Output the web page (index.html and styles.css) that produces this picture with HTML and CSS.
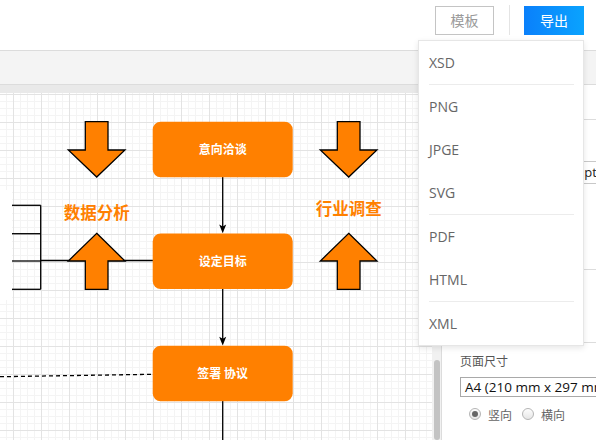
FILE: index.html
```html
<!DOCTYPE html>
<html lang="zh-CN">
<head>
<meta charset="utf-8">
<title>流程图编辑器</title>
<link rel="stylesheet" href="styles.css">
</head>
<body>
<div class="app">
  <header class="header">
    <button class="btn btn-ghost">模板</button>
    <span class="sep"></span>
    <button class="btn btn-primary">导出</button>
  </header>
  <div class="toolbar"></div>
  <div class="main">
    <div class="canvas-col">
      <div class="ruler"></div>
      <div class="canvas-wrap">
        <div class="canvas">
          <svg class="diagram" width="432" height="347" viewBox="0 93 432 347" xmlns="http://www.w3.org/2000/svg">
            <!-- off-screen shape on the left -->
            <rect x="0" y="190" width="12" height="110" fill="#fff"/>
            <g stroke="#000" stroke-width="1.3" fill="none">
              <line x1="12" y1="205.3" x2="40.7" y2="205.3"/>
              <line x1="12" y1="233.7" x2="40.7" y2="233.7"/>
              <line x1="12" y1="261" x2="40.7" y2="261"/>
              <line x1="12" y1="289.3" x2="40.7" y2="289.3"/>
              <line x1="40.7" y1="205.3" x2="40.7" y2="289.3"/>
              <line x1="40.7" y1="260.5" x2="153" y2="260.5"/>
              <line x1="0" y1="376.7" x2="152" y2="374.3" stroke-dasharray="4 3"/>
              <line x1="222.7" y1="177" x2="222.7" y2="227"/>
              <line x1="222.7" y1="289" x2="222.7" y2="339"/>
              <line x1="222.7" y1="401" x2="222.7" y2="440"/>
            </g>
            <polygon points="222.7,233.3 219.2,224.6 222.7,226.6 226.2,224.6" fill="#000"/>
            <polygon points="222.7,345.5 219.2,336.8 222.7,338.8 226.2,336.8" fill="#000"/>

            <!-- big arrows -->
            <g fill="#ff8000" stroke="#000" stroke-width="1.3" stroke-linejoin="miter">
              <polygon points="85.3,121.7 108,121.7 108,150 125,150 96.7,177 68.3,150 85.3,150"/>
              <polygon points="96.7,233.3 125,261 108,261 108,289.3 85.3,289.3 85.3,261 68.3,261"/>
              <polygon points="337.3,121.7 360,121.7 360,150 377,150 348.7,177 320.3,150 337.3,150"/>
              <polygon points="348.7,233.3 377,261 360,261 360,289.3 337.3,289.3 337.3,261 320.3,261"/>
            </g>

            <!-- process boxes -->
            <g fill="#ff8000">
              <rect x="152.7" y="121.7" width="140" height="55.6" rx="8"/>
              <rect x="152.7" y="233.5" width="140" height="55.6" rx="8"/>
              <rect x="152.7" y="345.7" width="140" height="55.6" rx="8"/>
            </g>
            <g class="box-text" fill="#fff" text-anchor="middle">
              <text x="222.7" y="154">意向洽谈</text>
              <text x="222.7" y="265.7">设定目标</text>
              <text x="222.7" y="378">签署 协议</text>
            </g>
            <g class="label-text" fill="#ff8000" text-anchor="middle">
              <text x="96.7" y="218.5">数据分析</text>
              <text x="348.7" y="215">行业调查</text>
            </g>
          </svg>
        </div>
        <div class="vscroll"><div class="thumb"></div></div>
      </div>
    </div>
    <aside class="panel">
      <div class="panel-tabs"></div>
      <div class="panel-sec sec-grid">
        <div class="unit-input">10 pt</div>
      </div>
      <div class="panel-sec sec-mid"></div>
      <div class="sec-page">
        <div class="page-label">页面尺寸</div>
        <div class="page-select">A4 (210 mm x 297 mm)</div>
        <div class="radios">
          <span class="radio checked"></span><span class="radio-text">竖向</span>
          <span class="radio"></span><span class="radio-text">横向</span>
        </div>
      </div>
    </aside>
  </div>

  <div class="menu">
    <div class="menu-item">XSD</div>
    <div class="menu-div"></div>
    <div class="menu-item">PNG</div>
    <div class="menu-item">JPGE</div>
    <div class="menu-item">SVG</div>
    <div class="menu-div"></div>
    <div class="menu-item">PDF</div>
    <div class="menu-item">HTML</div>
    <div class="menu-div"></div>
    <div class="menu-item">XML</div>
  </div>
</div>
</body>
</html>
```

FILE: styles.css
```css
* {
  box-sizing: border-box;
  margin: 0;
  padding: 0;
}

html, body {
  width: 596px;
  height: 440px;
  overflow: hidden;
  background: #fff;
}

body {
  font-family: "Noto Sans CJK SC", "Open Sans", sans-serif;
}

.app {
  position: relative;
  width: 596px;
  height: 440px;
}

/* header */
.header {
  height: 51px;
  border-bottom: 1px solid #dcdcdc;
  display: flex;
  justify-content: flex-end;
  align-items: flex-start;
  padding: 6px 12px 0 0;
}

.btn {
  height: 29px;
  font-family: "Noto Sans CJK SC", sans-serif;
  font-size: 14px;
  line-height: 27px;
  cursor: pointer;
}

.btn-ghost {
  width: 59px;
  border: 1px solid #c4c4c4;
  background: #fff;
  color: #9a9a9a;
}

.sep {
  width: 1px;
  height: 30px;
  margin: -1px 14px 0 15px;
  background: #e4e4e4;
}

.btn-primary {
  width: 60px;
  border: none;
  line-height: 29px;
  background: linear-gradient(90deg, #0a80fb, #0aa3fe);
  color: #fff;
}

/* toolbar */
.toolbar {
  height: 33px;
  background: #f4f4f4;
}

.main {
  display: flex;
  height: 356px;
  overflow: hidden;
}

.canvas-col {
  width: 441px;
  flex-shrink: 0;
  display: flex;
  flex-direction: column;
}

.ruler {
  height: 9px;
  flex-shrink: 0;
  border-top: 1px solid #dcdcdc;
  background: #e9e9e9;
}

.canvas-wrap {
  height: 347px;
  display: flex;
  overflow: hidden;
}

.canvas {
  width: 432px;
  height: 347px;
  background-color: #fff;
  background-image:
    linear-gradient(#e3e3e3 1px, transparent 1px),
    linear-gradient(90deg, #e3e3e3 1px, transparent 1px),
    linear-gradient(#f4f4f4 1px, transparent 1px),
    linear-gradient(90deg, #f4f4f4 1px, transparent 1px);
  background-size: 28px 28px, 28px 28px, 7px 7px, 7px 7px;
  background-position: 0 1px, 13px 0, 0 1px, 13px 0;
}

.diagram {
  display: block;
}

.box-text {
  font-family: "Noto Sans CJK SC", sans-serif;
  font-weight: 700;
  font-size: 12px;
}

.label-text {
  font-family: "Noto Sans CJK SC", sans-serif;
  font-weight: 700;
  font-size: 16.5px;
}

.vscroll {
  width: 9px;
  height: 347px;
  background: #f1f1f1;
  padding: 267px 1px 0 2px;
}

.thumb {
  height: 80px;
  background: #c3c3c3;
  border-radius: 3px;
}

/* right panel */
.panel {
  flex: 1;
  border-left: 1px solid #dcdcdc;
  border-top: 1px solid #dcdcdc;
  background: #fff;
  overflow: hidden;
}

.panel-tabs {
  height: 35px;
  border-bottom: 1px solid #dcdcdc;
}

.panel-sec {
  border-bottom: 1px solid #dcdcdc;
}

.sec-grid {
  height: 150px;
  padding-top: 41px;
}

.unit-input {
  margin-left: 119px;
  width: 70px;
  height: 23px;
  border: 1px solid #c8c8c8;
  font-family: "Open Sans", sans-serif;
  font-size: 13px;
  line-height: 21px;
  padding-left: 4px;
  color: #222;
  white-space: nowrap;
}

.sec-mid {
  height: 73px;
}

.sec-page {
  padding: 10px 0 0 18px;
}

.page-label {
  font-size: 12px;
  line-height: 16px;
  color: #555;
}

.page-select {
  margin-top: 8px;
  width: 150px;
  height: 20px;
  border: 1px solid #a9a9a9;
  padding-left: 4px;
  font-family: "Open Sans", sans-serif;
  font-size: 13.5px;
  line-height: 18px;
  color: #111;
  white-space: nowrap;
  overflow: hidden;
}

.radios {
  margin-top: 8px;
  height: 18px;
  display: flex;
  align-items: center;
  padding-left: 9px;
}

.radio {
  width: 12px;
  height: 12px;
  border: 1px solid #b5b5b5;
  border-radius: 50%;
  background: linear-gradient(#fdfdfd, #e6e6e6);
  display: flex;
  align-items: center;
  justify-content: center;
}

.radio.checked::after {
  content: "";
  width: 6px;
  height: 6px;
  border-radius: 50%;
  background: #666;
}

.radio-text {
  margin: 0 10px 0 7px;
  font-size: 12px;
  color: #666;
}

/* export dropdown */
.menu {
  position: absolute;
  left: 418px;
  top: 40px;
  width: 166px;
  border: 1px solid #e6e6e6;
  background: #fff;
  box-shadow: 0 2px 6px rgba(0, 0, 0, 0.1);
}

.menu-item {
  height: 43px;
  line-height: 43px;
  padding-left: 10px;
  font-family: "Open Sans", sans-serif;
  font-size: 14px;
  color: #666;
}

.menu-div {
  height: 1px;
  margin: 0 9px 0 10px;
  background: #ececec;
}
```
